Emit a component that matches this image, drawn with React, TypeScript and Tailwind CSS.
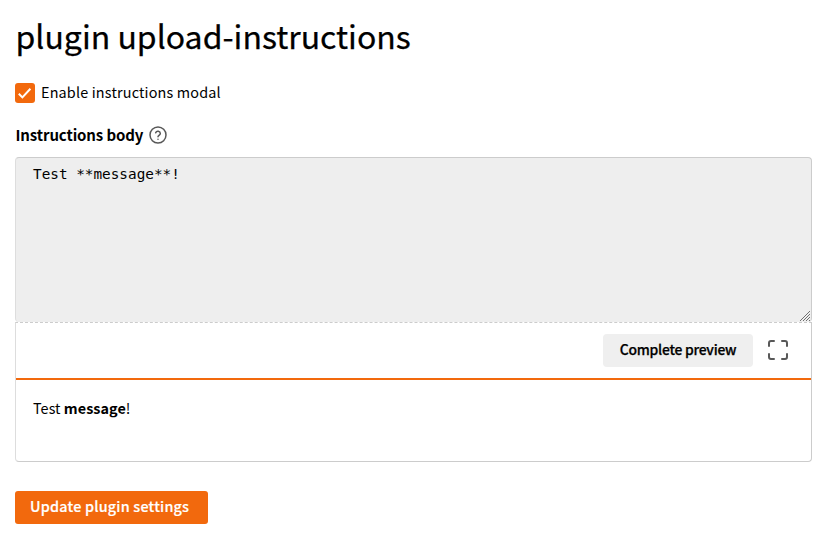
import React from "react";

function HelpIcon() {
  return (
    <svg className="ml-1 h-5 w-5" viewBox="0 0 24 24" fill="none" stroke="#585858" strokeWidth="1.8" strokeLinecap="round" strokeLinejoin="round">
      <circle cx="12" cy="12" r="9.6" />
      <path d="M9.2 9.3a2.9 2.9 0 0 1 5.6 1c0 1.9-2.8 2.3-2.8 3.7" />
      <path d="M12 17h.01" />
    </svg>
  );
}

function MaximizeIcon() {
  return (
    <svg className="h-6 w-6" viewBox="0 0 24 24" fill="none" stroke="#585858" strokeWidth="2" strokeLinecap="round" strokeLinejoin="round">
      <path d="M8 3H5a2 2 0 0 0-2 2v3m18 0V5a2 2 0 0 0-2-2h-3m0 18h3a2 2 0 0 0 2-2v-3M3 16v3a2 2 0 0 0 2 2h3" />
    </svg>
  );
}

function ResizeGrip() {
  return (
    <svg className="absolute right-0 bottom-px h-3 w-3" viewBox="0 0 12 12" fill="none" stroke="#707070" strokeWidth="1">
      <path d="M1 12L11 2M4 12L11 5M7 12L11 8M10 12L11 11" />
    </svg>
  );
}

export default function App() {
  return (
    <main className="h-[539px] w-[829px] overflow-hidden bg-white pl-[15px] font-['Noto_Sans_CJK_SC',sans-serif] text-[14.4px] text-black">
      <h1 className="flex h-[75px] items-center pb-1.5 pl-[0.5px] text-[32px] leading-none font-normal whitespace-nowrap [-webkit-text-stroke:0.25px_black]">
        plugin upload-instructions
      </h1>

      <label className="mt-2 flex h-5 items-center">
        <span className="flex h-5 w-5 items-center justify-center rounded-[3px] bg-[#f2690d]">
          <svg className="h-5 w-5" viewBox="0 0 20 20" fill="none" stroke="white" strokeWidth="2">
            <path d="M3.8 10.8L7.4 14.4L15.4 5.8" />
          </svg>
        </span>
        <span className="ml-1.5 pb-0.5 leading-[18px] tracking-[0.17px] whitespace-nowrap">Enable instructions modal</span>
      </label>

      <div className="mt-[22px] flex h-5 items-center">
        <span className="w-[129px] pl-[0.5px] text-[15px] leading-5 font-bold tracking-[-0.12px] whitespace-nowrap">Instructions body</span>
        <HelpIcon />
      </div>

      <section className="mt-3 flex h-[305px] w-[797px] flex-col">
        <div className="relative h-[165px] rounded-[4px] border border-b-0 border-[#ccc] border-l-[#ddd] bg-[#eee] px-[17px] pt-1.5 font-['DejaVu_Sans_Mono',monospace] text-[14.35px] leading-5">
          Test **message**!
          <ResizeGrip />
        </div>
        <div className="flex h-[56px] items-center justify-end border-x border-t border-x-[#ccc] border-t-[#ccc] border-l-[#ddd] pr-[21.5px] pb-px [border-top-style:dashed]">
          <button className="h-[33px] w-[150px] rounded-[4px] bg-[#efefef] pb-0.5 text-[13.9px] leading-5 font-medium tracking-[-0.25px] whitespace-nowrap [-webkit-text-stroke:0.25px_black]">
            Complete preview
          </button>
          <span className="ml-[12.5px]"><MaximizeIcon /></span>
        </div>
        <div className="flex-1 rounded-b-[4px] border border-t-0 border-[#ccc] border-l-[#ddd]">
          <div className="h-0.5 bg-[#f2690d]" />
          <p className="px-[17px] pt-[18px] leading-5 tracking-[0.05px]">
            Test <strong>message</strong>!
          </p>
        </div>
      </section>

      <button className="mt-[29px] flex h-[33px] w-[193px] items-center rounded-[3px] bg-[#f2690d] pb-[3px] pl-[15px] text-[14.4px] leading-5 font-medium tracking-[0.2px] whitespace-nowrap text-white [-webkit-text-stroke:0.2px_white]">
        Update plugin settings
      </button>
    </main>
  );
}
